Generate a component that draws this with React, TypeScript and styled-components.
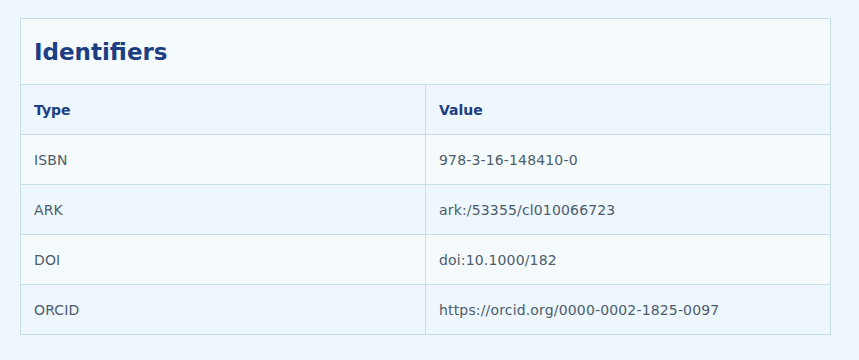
import React from 'react';
import styled, { createGlobalStyle } from 'styled-components';

const GlobalStyle = createGlobalStyle`
  body {
    margin: 0;
    background: #eef6fe;
    font-family: "DejaVu Sans", Verdana, sans-serif;
  }
`;

const Page = styled.div`
  padding: 18px 28px 18px 20px;
`;

const Card = styled.section`
  width: 811px;
  box-sizing: border-box;
  background: #f5fbfc;
  border: 1px solid #c5dfe3;
`;

const Title = styled.h2`
  margin: 0;
  padding: 0 13px;
  height: 65px;
  display: flex;
  align-items: center;
  font-size: 23px;
  font-weight: 700;
  color: #1b3f82;
  border-bottom: 1px solid #c5dfe3;
`;

const Table = styled.table`
  width: 100%;
  border-collapse: collapse;
  table-layout: fixed;
`;

const Row = styled.tr<{ $alt?: boolean }>`
  background: ${(p) => (p.$alt ? '#eef6fe' : '#f5fbfc')};
`;

const Head = styled.th`
  height: 49px;
  padding: 0 13px;
  text-align: left;
  font-size: 14px;
  font-weight: 700;
  color: #1b3f82;
  & + & {
    border-left: 1px solid #c5dfe3;
  }
`;

const Cell = styled.td`
  height: 49px;
  padding: 0 13px;
  font-size: 14px;
  letter-spacing: 0.16px;
  color: #4d5d6c;
  border-top: 1px solid #c5dfe3;
  & + & {
    border-left: 1px solid #c5dfe3;
  }
`;

const identifiers = [
  ['ISBN', '978-3-16-148410-0'],
  ['ARK', 'ark:/53355/cl010066723'],
  ['DOI', 'doi:10.1000/182'],
  ['ORCID', 'https://orcid.org/0000-0002-1825-0097'],
];

export default function App() {
  return (
    <Page>
      <GlobalStyle />
      <Card>
        <Title>Identifiers</Title>
        <Table>
          <thead>
            <Row $alt>
              <Head>Type</Head>
              <Head>Value</Head>
            </Row>
          </thead>
          <tbody>
            {identifiers.map(([type, value], i) => (
              <Row key={type} $alt={i % 2 === 1}>
                <Cell>{type}</Cell>
                <Cell>{value}</Cell>
              </Row>
            ))}
          </tbody>
        </Table>
      </Card>
    </Page>
  );
}
